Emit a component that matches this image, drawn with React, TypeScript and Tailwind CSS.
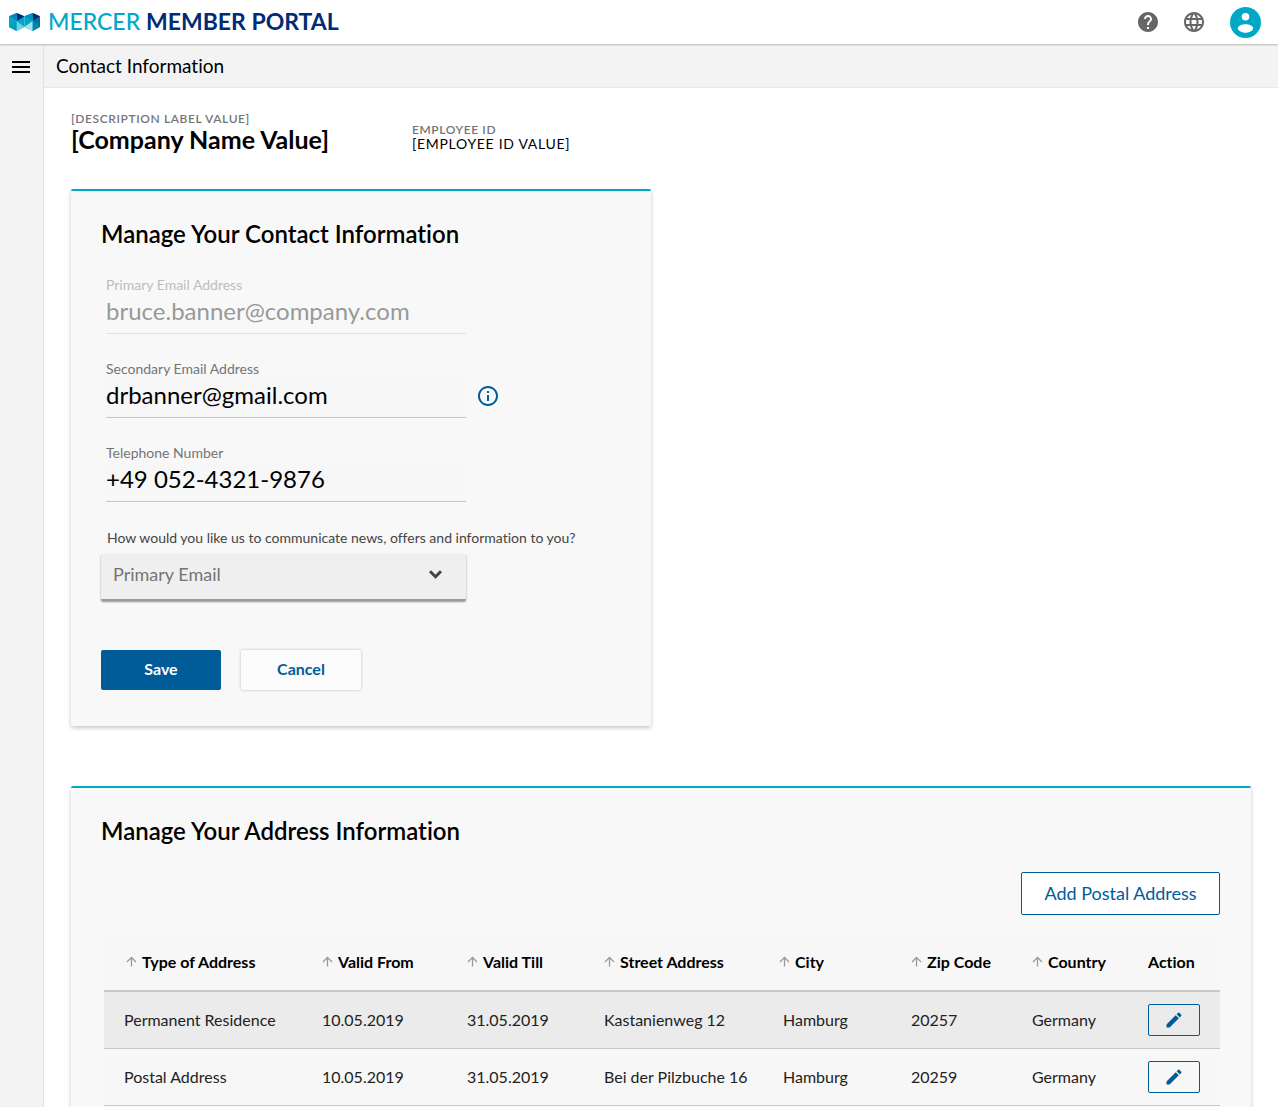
import React from "react";
import { MdArrowUpward, MdEdit, MdHelp, MdInfoOutline, MdLanguage, MdMenu } from "react-icons/md";

function Logo() {
  return (
    <svg width="31" height="18" viewBox="0 0 93 54" aria-hidden="true">
      <polygon points="0,10 23,0 46,10 46,42 23,54 0,42" fill="#00a8c8" />
      <polygon points="46,10 71,0 93,10 93,42 71,54 46,42" fill="#00a8c8" />
      <polygon points="0,10 23,0 23,22" fill="#0088b3" />
      <polygon points="23,0 46,10 25,24" fill="#002c77" />
      <polygon points="0,42 23,22 23,54" fill="#009abf" />
      <polygon points="23,24 46,42 23,54" fill="#6fd0e0" />
      <polygon points="46,10 71,0 68,22" fill="#0091bd" />
      <polygon points="71,0 93,10 72,24" fill="#002c77" />
      <polygon points="71,24 46,42 71,54" fill="#a6e2ec" />
      <polygon points="93,10 71,24 93,42" fill="#006d9e" />
      <polygon points="71,24 93,42 71,54" fill="#0088b3" />
    </svg>
  );
}

function AccountIcon() {
  return (
    <svg width="37" height="37" viewBox="0 0 37 37" aria-hidden="true">
      <circle cx="18.5" cy="18.5" r="15.5" fill="currentColor" />
      <circle cx="18.5" cy="12.7" r="3.8" fill="#ffffff" />
      <path
        d="M18.5 20.2c3.8 0 7.7 1.6 7.7 4.1 0 2.3-3.9 4.5-7.7 4.5s-7.7-2.2-7.7-4.5c0-2.5 3.9-4.1 7.7-4.1z"
        fill="#ffffff"
      />
    </svg>
  );
}

type FieldProps = {
  id: string;
  label: string;
  value: string;
  type: string;
  disabled?: boolean;
  hint?: React.ReactNode;
};

function Field({ id, label, value, type, disabled, hint }: FieldProps) {
  return (
    <div className="flex items-end gap-[10px]">
      <div className="w-[360px]">
        <label
          htmlFor={id}
          className={
            disabled
              ? "block text-sm leading-4 text-[#bdbdbd]"
              : "block text-sm leading-4 text-[#757575]"
          }
        >
          {label}
        </label>
        <input
          id={id}
          type={type}
          defaultValue={value}
          disabled={disabled}
          className={
            disabled
              ? "block h-[41px] w-full border-b border-[#e3e3e3] bg-transparent pb-1.5 text-2xl text-[#999999] outline-none"
              : "block h-[41px] w-full border-b border-[#c6c6c6] bg-[#f7f7f7] pb-1.5 text-2xl text-black outline-none"
          }
        />
      </div>
      {hint}
    </div>
  );
}

const columns = [
  { label: "Type of Address", col: "w-[198px]", pad: "pl-[22px]" },
  { label: "Valid From", col: "w-[145px]", pad: "pl-5" },
  { label: "Valid Till", col: "w-[137px]", pad: "pl-5" },
  { label: "Street Address", col: "w-[179px]", pad: "pl-5" },
  { label: "City", col: "w-[128px]", pad: "pl-4" },
  { label: "Zip Code", col: "w-[121px]", pad: "pl-5" },
  { label: "Country", col: "w-[116px]", pad: "pl-5" },
];

const rows = [
  ["Permanent Residence", "10.05.2019", "31.05.2019", "Kastanienweg 12", "Hamburg", "20257", "Germany"],
  ["Postal Address", "10.05.2019", "31.05.2019", "Bei der Pilzbuche 16", "Hamburg", "20259", "Germany"],
];

const card =
  "border-t-2 border-[#00a8c8] rounded-xs bg-[#f8f8f8] pt-[27px] pr-[31px] pl-[30px] shadow-[0_2px_4px_rgba(0,0,0,0.22)]";

export default function App() {
  return (
    <div className="flex h-screen flex-col overflow-hidden bg-white font-['Lato',sans-serif] text-black [font-variant-ligatures:none]">
      <header className="z-10 flex h-11 shrink-0 items-center justify-between bg-white pr-[14px] pl-[9px] shadow-[0_1px_2px_rgba(0,0,0,0.25)]">
        <a href="#home" className="flex items-center gap-2">
          <Logo />
          <span className="pb-0.5 text-[23px] leading-7 font-medium whitespace-nowrap text-[#00a8c8]">
            MERCER <span className="font-bold text-[#002c77]">MEMBER PORTAL</span>
          </span>
        </a>
        <nav className="flex items-center text-[#666666]">
          <button type="button" aria-label="Help">
            <MdHelp size={24} />
          </button>
          <button type="button" aria-label="Language" className="ml-[22px]">
            <MdLanguage size={24} />
          </button>
          <button type="button" aria-label="Account" className="ml-[21px] text-[#00a8c8]">
            <AccountIcon />
          </button>
        </nav>
      </header>

      <div className="flex min-h-0 flex-1">
        <aside className="w-11 shrink-0 border-r border-[#e2e2e2] bg-[#f3f3f3] pt-[11px] pl-[9px]">
          <button type="button" aria-label="Menu" className="block">
            <MdMenu size={24} />
          </button>
        </aside>

        <div className="flex min-w-0 flex-1 flex-col">
          <div className="flex h-11 shrink-0 items-center border-b border-[#e8e8e8] bg-[#f3f3f3] px-3">
            <h1 className="text-[19px] leading-6">Contact Information</h1>
          </div>

          <main className="min-h-0 flex-1 overflow-y-auto px-[27px] pt-6 [scrollbar-width:none]">
            <div className="flex h-[77px] gap-[83px]">
              <div>
                <p className="text-xs leading-[14px] font-semibold tracking-wider text-[#757575]">[DESCRIPTION LABEL VALUE]</p>
                <p className="text-[25px] leading-[26px] font-bold">[Company Name Value]</p>
              </div>
              <div className="pt-[11px]">
                <p className="text-xs leading-[14px] font-semibold tracking-wider text-[#757575]">EMPLOYEE ID</p>
                <p className="text-sm leading-[14px] tracking-wider">[EMPLOYEE ID VALUE]</p>
              </div>
            </div>

            <section className={card + " min-h-[537px] max-w-[580px]"}>
              <h2 className="text-2xl leading-8 font-semibold">Manage Your Contact Information</h2>
              <form>
                <div className="mt-[27px] flex flex-col gap-[27px] pl-[5px]">
                  <Field id="primary" label="Primary Email Address" value="bruce.banner@company.com" type="email" disabled />
                  <Field
                    id="secondary"
                    label="Secondary Email Address"
                    value="drbanner@gmail.com"
                    type="email"
                    hint={
                      <button type="button" aria-label="About the secondary email" className="pb-[10px] text-[#005c99]">
                        <MdInfoOutline size={24} />
                      </button>
                    }
                  />
                  <Field id="phone" label="Telephone Number" value="+49 052-4321-9876" type="tel" />
                </div>
                <label htmlFor="channel" className="mt-7 block pl-1.5 text-sm leading-4 text-[#444444]">
                  How would you like us to communicate news, offers and information to you?
                </label>
                <div className="relative mt-2 w-[365px]">
                  <select
                    id="channel"
                    className="h-[47px] w-full appearance-none rounded-xs border-b-2 border-[#9a9a9a] bg-[#efefef] px-3 pb-1.5 text-lg text-[#757575] shadow-[0_1px_2px_rgba(0,0,0,0.4)] outline-none"
                  >
                    <option>Primary Email</option>
                  </select>
                  <svg
                    className="pointer-events-none absolute top-4 right-6"
                    width="13"
                    height="9"
                    viewBox="0 0 13 9"
                    fill="none"
                    stroke="#424242"
                    strokeWidth="3"
                    aria-hidden="true"
                  >
                    <path d="M1 1.2 6.5 6.7 12 1.2" />
                  </svg>
                </div>
                <div className="mt-[49px] flex gap-5">
                  <button type="submit" className="h-10 w-[120px] rounded-xs bg-[#005c99] pb-0.5 text-base font-bold text-white">
                    Save
                  </button>
                  <button
                    type="button"
                    className="h-10 w-[120px] rounded-xs bg-[#fbfbfb] pb-0.5 text-base font-bold text-[#005c99] shadow-[0_0_3px_rgba(0,0,0,0.25)]"
                  >
                    Cancel
                  </button>
                </div>
              </form>
            </section>

            <section className={card + " mt-[60px] pb-16"}>
              <h2 className="text-2xl leading-8 font-semibold">Manage Your Address Information</h2>
              <div className="mt-[25px] flex justify-end">
                <button
                  type="button"
                  className="h-[43px] w-[199px] rounded-xs border border-[#005c99] bg-white pb-0.5 text-lg text-[#005c99]"
                >
                  Add Postal Address
                </button>
              </div>
              <div className="mt-[18px] pl-[3px]">
                <table className="w-full table-fixed border-collapse bg-[#f7f7f7] text-left text-base">
                  <colgroup>
                    {columns.map((c) => (
                      <col key={c.label} className={c.col} />
                    ))}
                    <col className="w-[92px]" />
                  </colgroup>
                  <thead>
                    <tr className="h-[58px] border-b-2 border-[#c8c8c8]">
                      {columns.map((c) => (
                        <th key={c.label} scope="col" className={c.pad + " font-bold whitespace-nowrap"}>
                          <button type="button" className="-ml-0.5 flex items-center gap-[3px]">
                            <MdArrowUpward size={15} className="text-[#999999]" />
                            {c.label}
                          </button>
                        </th>
                      ))}
                      <th scope="col" className="pl-5 font-bold">
                        Action
                      </th>
                    </tr>
                  </thead>
                  <tbody>
                    {rows.map((r) => (
                      <tr key={r[0]} className="h-[57px] border-b border-[#c8c8c8] text-[#222222] odd:bg-[#ebebeb]">
                        {r.map((cell, i) => (
                          <td key={i} className="pl-5 whitespace-nowrap">
                            {cell}
                          </td>
                        ))}
                        <td className="pl-5">
                          <button
                            type="button"
                            aria-label={"Edit " + r[0]}
                            className="flex h-8 w-[52px] items-center justify-center rounded-xs border border-[#005c99] text-[#005c99]"
                          >
                            <MdEdit size={20} />
                          </button>
                        </td>
                      </tr>
                    ))}
                  </tbody>
                </table>
              </div>
            </section>
          </main>
        </div>
      </div>
    </div>
  );
}
